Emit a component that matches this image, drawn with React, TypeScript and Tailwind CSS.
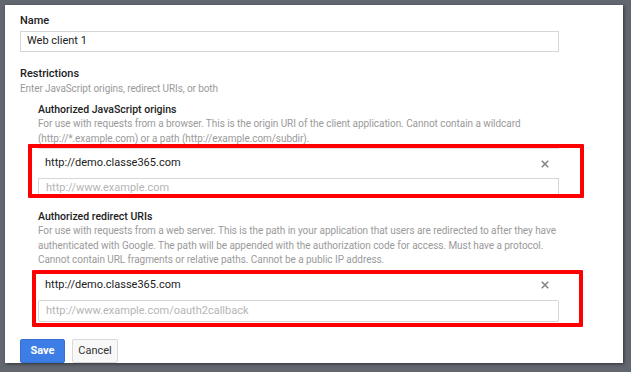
import React from "react";

const font = { fontFamily: "Roboto, 'Noto Sans', Arial, sans-serif" };

function XIcon() {
  return (
    <svg width="8" height="8" viewBox="0 0 8 8" className="block">
      <path d="M1.3 1.3 L6.7 6.7 M6.7 1.3 L1.3 6.7" stroke="#858585" strokeWidth="1.6" strokeLinecap="square" />
    </svg>
  );
}

export default function App() {
  return (
    <div className="relative w-[631px] h-[372px] overflow-hidden bg-[#62666f] pt-[5px] pl-[5px] pr-[8px]" style={font}>
      <div className="w-[618px] h-[358px] bg-white overflow-hidden pl-[15px] pt-[8px] shadow-[1px_1px_3px_rgba(0,0,0,0.5)]">
        <div className="text-[11px] leading-[15px] h-[15px] font-medium text-[#212121]">Name</div>
        <div className="mt-[3px] w-[539px] h-[21px] border border-[#d6d6d6] flex items-center px-[6px] text-[11px] text-[#212121]">
          Web client 1
        </div>

        <div className="mt-[14px] text-[11px] leading-[15px] h-[15px] font-medium text-[#212121]">Restrictions</div>
        <div className="text-[10px] tracking-[-0.1px] leading-[15px] h-[15px] text-[#9a9a9a]">Enter JavaScript origins, redirect URIs, or both</div>

        <div className="ml-[18px] w-[521px]">
          <div className="mt-[7px] text-[10.5px] leading-[14px] h-[14px] font-medium text-[#212121]">Authorized JavaScript origins</div>
          <div className="text-[10px] tracking-[-0.05px] leading-[14.5px] text-[#9a9a9a] whitespace-nowrap">
            <div>For use with requests from a browser. This is the origin URI of the client application. Cannot contain a wildcard</div>
            <div>(http://*.example.com) or a path (http://example.com/subdir).</div>
          </div>
          <div className="mt-[2px] h-[30px] border-t border-[#e3e3e3] flex items-center justify-between pl-[7px] pr-[10px]">
            <span className="text-[11px] text-[#212121]">http://demo.classe365.com</span>
            <XIcon />
          </div>
          <div className="h-[20px] border border-[#d6d6d6] flex items-center px-[7px] text-[11px] text-[#b5b5b5]">
            http://www.example.com
          </div>

          <div className="mt-[12px] text-[10.5px] leading-[14px] h-[14px] font-medium text-[#212121]">Authorized redirect URIs</div>
          <div className="text-[10px] tracking-[-0.05px] leading-[14.5px] text-[#9a9a9a] whitespace-nowrap">
            <div>For use with requests from a web server. This is the path in your application that users are redirected to after they have</div>
            <div>authenticated with Google. The path will be appended with the authorization code for access. Must have a protocol.</div>
            <div>Cannot contain URL fragments or relative paths. Cannot be a public IP address.</div>
          </div>
          <div className="mt-[2.5px] h-[30px] flex items-center justify-between pl-[7px] pr-[10px]">
            <span className="text-[11px] text-[#212121]">http://demo.classe365.com</span>
            <XIcon />
          </div>
          <div className="h-[22px] border border-[#d6d6d6] rounded-[2px] flex items-center px-[7px] text-[11px] text-[#b5b5b5]">
            http://www.example.com/oauth2callback
          </div>
        </div>

        <div className="mt-[17px] flex gap-[7px]">
          <div className="w-[45px] h-[24px] rounded-[2px] bg-[#3c7de6] border border-[#3570d4] flex items-center justify-center text-[11px] font-bold text-white">
            Save
          </div>
          <div className="w-[46px] h-[24px] rounded-[2px] bg-[#f8f8f8] border border-[#d9d9d9] flex items-center justify-center text-[11px] text-[#333]">
            Cancel
          </div>
        </div>
      </div>

      <div className="absolute left-[28px] top-[144px] w-[556px] h-[54px] border-[4px] border-[#ff0000] rounded-[1px] pointer-events-none" />
      <div className="absolute left-[32px] top-[270px] w-[551px] h-[57px] border-[4px] border-[#ff0000] rounded-[1px] pointer-events-none" />
    </div>
  );
}
